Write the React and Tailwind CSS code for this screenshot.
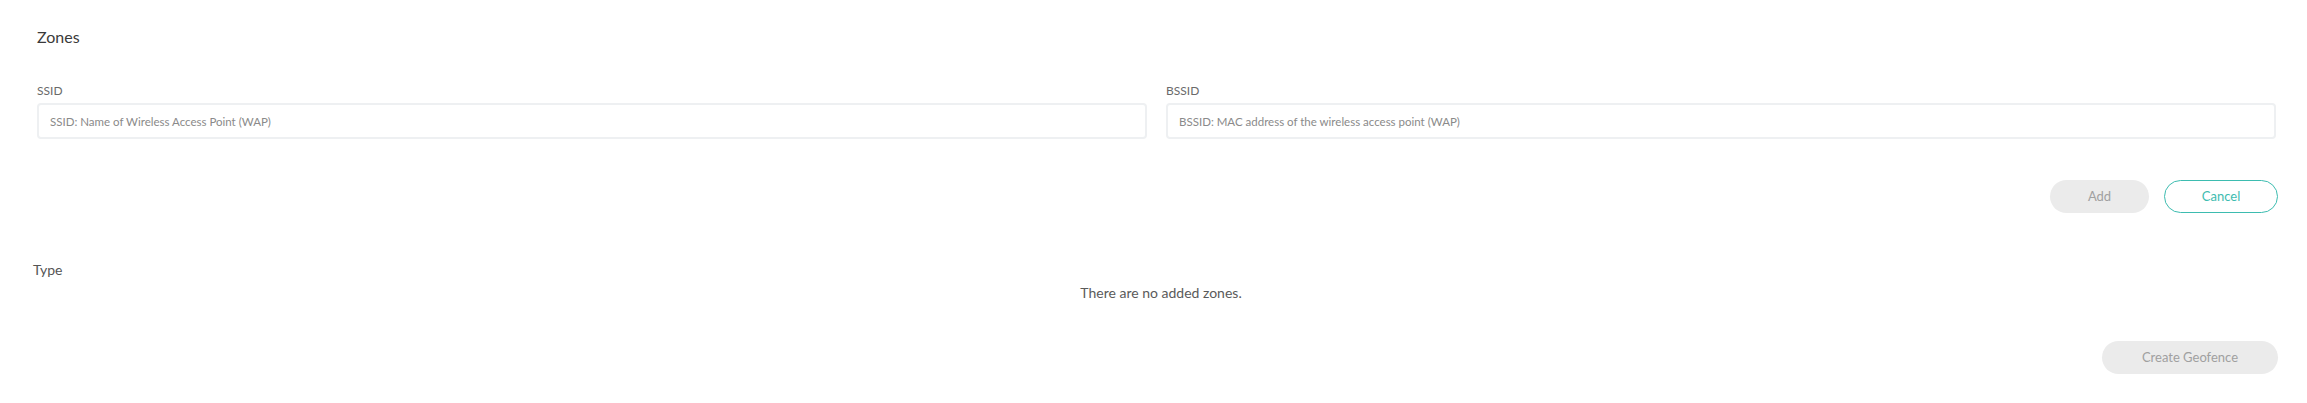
export default function App() {
  return (
    <div className="min-h-[403px] w-full bg-white font-['Lato','Noto_Sans',sans-serif] text-[#444]">
      <div className="pl-[37px] pr-[29px] pt-[27px]">
        <h2 className="text-[16px] leading-[20px] font-normal text-[#3a3a3a]">Zones</h2>

        <div className="mt-[36px] grid grid-cols-2 gap-[19px] pr-[2px]">
          <div>
            <label className="block text-[12px] leading-[15px] text-[#6a6a6a]">SSID</label>
            <input
              className="mt-[5px] h-[36px] w-full rounded-[4px] border-2 border-[#eef0f2] bg-white px-[11px] text-[11.5px] text-[#555] placeholder:text-[#8a8a8a] outline-none"
              placeholder="SSID: Name of Wireless Access Point (WAP)"
            />
          </div>
          <div>
            <label className="block text-[12px] leading-[15px] text-[#6a6a6a]">BSSID</label>
            <input
              className="mt-[5px] h-[36px] w-full rounded-[4px] border-2 border-[#eef0f2] bg-white px-[11px] text-[11.5px] text-[#555] placeholder:text-[#8a8a8a] outline-none"
              placeholder="BSSID: MAC address of the wireless access point (WAP)"
            />
          </div>
        </div>

        <div className="mt-[41px] flex justify-end gap-[15px]">
          <button className="h-[33px] w-[99px] rounded-full bg-[#ebebeb] text-[13px] text-[#a0a0a0]">Add</button>
          <button className="h-[33px] w-[114px] rounded-full border border-[#3dbcb0] bg-white text-[13px] text-[#3dbcb0]">
            Cancel
          </button>
        </div>
      </div>

      <div className="pl-[33px] pr-[29px]">
        <div className="mt-[47px] text-[14px] leading-[20px] text-[#555]">Type</div>
        <p className="mt-[3px] pl-[11px] text-center text-[14px] leading-[20px] text-[#5a5a5a]">There are no added zones.</p>
        <div className="mt-[38px] flex justify-end">
          <button className="h-[33px] w-[176px] rounded-full bg-[#ebebeb] text-[13px] text-[#a0a0a0]">
            Create Geofence
          </button>
        </div>
      </div>
    </div>
  );
}
